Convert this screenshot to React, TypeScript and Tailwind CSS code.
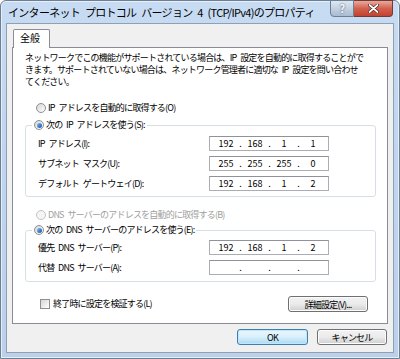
import React from "react";

const jp = "font-['Noto_Sans_CJK_JP','Noto_Sans',sans-serif]";
const sp = "\u2002";

function Radio({ checked, disabled }: { checked?: boolean; disabled?: boolean }) {
  return (
    <span
      className={`inline-flex items-center justify-center w-[10px] h-[10px] rounded-full border ${
        disabled ? "border-[#c4c4c4] bg-[#f4f4f4]" : "border-[#8e8f8f] bg-gradient-to-br from-[#d6d6d6] to-[#ffffff]"
      }`}
    >
      {checked && <span className="w-[5px] h-[5px] rounded-full bg-gradient-to-br from-[#7ec0f4] to-[#0d4fa8]" />}
    </span>
  );
}

function IpBox({ parts }: { parts: string[] }) {
  return (
    <div className="flex items-center w-[120px] h-[15px] bg-white border border-[#abadb3] border-t-[#8e939a] pl-[5px] text-[9px] leading-none tracking-normal">
      {parts.map((p, i) => (
        <React.Fragment key={i}>
          {i > 0 && <span className="w-[7px] text-center">.</span>}
          <span className="w-[22px] text-center">{p}</span>
        </React.Fragment>
      ))}
    </div>
  );
}

function Row({ label, parts }: { label: string; parts: string[] }) {
  return (
    <div className="flex items-center h-[15px]">
      <span className="w-[171px] whitespace-nowrap">{label}</span>
      <IpBox parts={parts} />
    </div>
  );
}

function WinButton({ children, primary, className = "" }: { children: React.ReactNode; primary?: boolean; className?: string }) {
  return (
    <button
      className={`h-[16px] rounded-[3px] border text-[9px] leading-none flex items-center justify-center ${
        primary
          ? "border-[#3c7fb1] bg-gradient-to-b from-[#eaf6fd] via-[#d9f0fc] to-[#a7d9f5] shadow-[inset_0_0_0_1px_#c4e5f6]"
          : "border-[#707070] bg-gradient-to-b from-[#f2f2f2] via-[#ebebeb] to-[#cfcfcf] shadow-[inset_0_0_0_1px_#fcfcfc]"
      } ${className}`}
    >
      {children}
    </button>
  );
}

export default function App() {
  return (
    <div className={`w-[400px] h-[359px] ${jp} text-black tracking-[-0.8px]`}>
      <div className="w-full h-full flex flex-col rounded-t-[6px] border border-[#6d7f95] bg-gradient-to-b from-[#c7dbf2] via-[#bfd4ed] to-[#bcd0ea] shadow-[inset_0_0_0_1px_#e6eef8]">
        {/* Title bar */}
        <div className="relative h-[22px] flex items-center pl-[7px] shrink-0">
          <span className="text-[11px] leading-none whitespace-nowrap tracking-[-0.7px]">
            インターネット{sp}プロトコル{sp}バージョン{sp}4{sp}(TCP/IPv4)のプロパティ
          </span>
          <div className="absolute top-[-1px] right-[6px] flex">
            <div className="w-[24px] h-[17px] rounded-bl-[4px] border border-[#6f7f93] bg-gradient-to-b from-[#dfe8f2] via-[#c3d1e0] to-[#a9bcd3] flex items-center justify-center text-[11px] font-bold text-[#f4f8fc] [text-shadow:0_0_2px_#3b4b5e]">
              ?
            </div>
            <div className="w-[39px] h-[17px] rounded-br-[4px] border border-l-0 border-[#6f3b35] bg-gradient-to-b from-[#e9a99c] via-[#d2604f] to-[#c4412f] flex items-center justify-center">
              <svg width="11" height="9" viewBox="0 0 11 9">
                <path d="M1.5 1 L9.5 8 M9.5 1 L1.5 8" stroke="#3a1c16" strokeWidth="3" strokeLinecap="round" />
                <path d="M1.5 1 L9.5 8 M9.5 1 L1.5 8" stroke="#ffffff" strokeWidth="1.8" strokeLinecap="round" />
              </svg>
            </div>
          </div>
        </div>

        {/* Client area */}
        <div className="flex-1 mx-[5px] mb-[5px] border border-[#8ea0b5] bg-[#f0f0f0] flex flex-col px-[5px] pt-[5px]">
          {/* Tab strip */}
          <div className="flex h-[18px] pl-[1px]">
            <div className="relative z-10 w-[37px] h-[19px] bg-white border border-[#898c95] border-b-0 rounded-t-[2px] text-[10px] flex items-start pl-[6px] pt-[3px] leading-none tracking-normal">
              全般
            </div>
          </div>
          {/* Tab panel */}
          <div className="h-[277px] bg-white border border-[#898c95] px-[12px] pr-[11px] pt-[4px] text-[9px] leading-[12px]">
            <p className="whitespace-nowrap">
              ネットワークでこの機能がサポートされている場合は、IP{sp}設定を自動的に取得することがで
              <br />
              きます。サポートされていない場合は、ネットワーク管理者に適切な{sp}IP{sp}設定を問い合わせ
              <br />
              てください。
            </p>

            <label className="flex items-center gap-[2px] mt-[14px] ml-[11px] h-[12px] whitespace-nowrap">
              <Radio />
              <span>IP{sp}アドレスを自動的に取得する(O)</span>
            </label>

            <fieldset className="mt-[5px] h-[78px] border border-[#d5dfe5] rounded-[3px] pt-[5px]">
              <legend className="ml-[6px] px-[2px] flex items-center gap-[2px] h-[12px] whitespace-nowrap">
                <Radio checked />
                <span>次の{sp}IP{sp}アドレスを使う(S):</span>
              </legend>
              <div className="flex flex-col gap-[5px] pl-[12px]">
                <Row label={`IP${sp}アドレス(I):`} parts={["192", "168", "1", "1"]} />
                <Row label={`サブネット${sp}マスク(U):`} parts={["255", "255", "255", "0"]} />
                <Row label={`デフォルト${sp}ゲートウェイ(D):`} parts={["192", "168", "1", "2"]} />
              </div>
            </fieldset>

            <label className="flex items-center gap-[2px] mt-[12px] ml-[11px] h-[12px] whitespace-nowrap text-[#a0a0a0]">
              <Radio disabled />
              <span>DNS{sp}サーバーのアドレスを自動的に取得する(B)</span>
            </label>

            <fieldset className="mt-[3px] h-[58px] border border-[#d5dfe5] rounded-[3px] pt-[4px]">
              <legend className="ml-[6px] px-[2px] flex items-center gap-[2px] h-[12px] whitespace-nowrap">
                <Radio checked />
                <span>次の{sp}DNS{sp}サーバーのアドレスを使う(E):</span>
              </legend>
              <div className="flex flex-col gap-[5px] pl-[12px]">
                <Row label={`優先${sp}DNS${sp}サーバー(P):`} parts={["192", "168", "1", "2"]} />
                <Row label={`代替${sp}DNS${sp}サーバー(A):`} parts={["", "", "", ""]} />
              </div>
            </fieldset>

            <div className="flex items-center justify-between mt-[14px]">
              <label className="flex items-center gap-[3px] ml-[15px] whitespace-nowrap">
                <span className="w-[10px] h-[10px] border border-[#8e8f8f] bg-gradient-to-br from-[#d6d6d6] to-[#ffffff]" />
                <span>終了時に設定を検証する(L)</span>
              </label>
              <WinButton className="w-[80px] mr-[8px]">詳細設定(V)...</WinButton>
            </div>
          </div>

          {/* Footer */}
          <div className="flex justify-end gap-[9px] mt-[5px] pr-[1px]">
            <WinButton primary className="w-[71px]">OK</WinButton>
            <WinButton className="w-[70px]">キャンセル</WinButton>
          </div>
        </div>
      </div>
    </div>
  );
}
